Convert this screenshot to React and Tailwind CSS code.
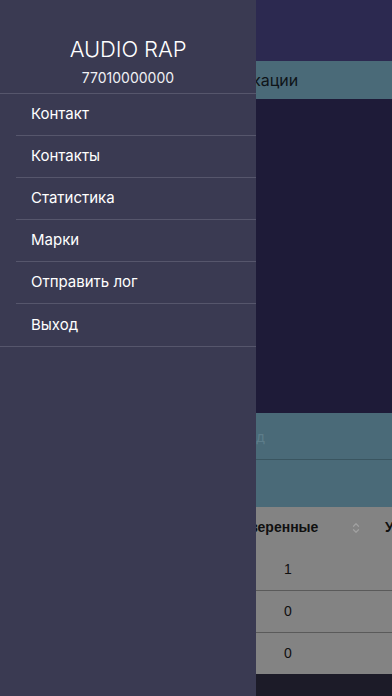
import { ChevronUp, ChevronDown } from "lucide-react";

const menu = ["Контакт", "Контакты", "Статистика", "Марки", "Отправить лог", "Выход"];
const rows = ["1", "0", "0"];

function MainScreen() {
  return (
    <div className="flex flex-col h-[696px] w-[392px] bg-[#1e1b38]">
      <div className="h-[61px] bg-[#2c2950]" />
      <div className="h-[38px] bg-[#4a6a78] flex items-center pl-[203px] text-[16px] text-[#0f1418] font-['Inter',sans-serif]">
        Публикации
      </div>
      <div className="flex-1" />
      <div className="h-[47px] bg-[#4a6a78] border-b border-[#3a5560] flex items-center pl-[239px] text-[14px] text-[#5d7d8a] font-['Inter',sans-serif]">
        Код
      </div>
      <div className="h-[47px] bg-[#4a6a78]" />
      <div className="bg-[#838383] font-['Liberation_Sans',sans-serif] text-[13px] text-[#101010]">
        <div className="h-[41px] flex items-center whitespace-nowrap">
          <span className="pl-[222px] w-[351px] shrink-0 font-bold text-[14px]">Проверенные</span>
          <span className="flex flex-col items-center -space-y-[4px] text-[#a0a0a0] shrink-0">
            <ChevronUp className="w-[10px] h-[10px]" strokeWidth={3} />
            <ChevronDown className="w-[10px] h-[10px]" strokeWidth={3} />
          </span>
          <span className="pl-[24px] font-bold text-[14px] shrink-0">Удаленные</span>
        </div>
        {rows.map((r, i) => (
          <div key={i} className={`h-[42px] flex items-center pl-[284px] text-[14px] ${i > 0 ? "border-t border-[#5a5a5a]" : ""}`}>
            {r}
          </div>
        ))}
      </div>
      <div className="h-[22px] bg-[#1c1b28]" />
    </div>
  );
}

function Drawer() {
  return (
    <div className="absolute left-0 top-0 h-[696px] w-[256px] bg-[#3a3a52] font-['Inter',sans-serif] text-white">
      <div className="h-[94px] flex flex-col items-center pt-[36px] border-b border-[#56566c]">
        <div className="text-[22px] font-light leading-[26px] tracking-[-0.1px]">AUDIO RAP</div>
        <div className="text-[14px] leading-[18px] mt-[7px] text-[#f0f0f4]">77010000000</div>
      </div>
      <div className="border-b border-[#56566c]">
        {menu.map((m, i) => (
          <div key={m} className="pl-[16px]">
            <div className={`h-[42px] flex items-center pl-[15px] text-[15px] ${i < menu.length - 1 ? "border-b border-[#56566c]" : ""}`}>
              {m}
            </div>
          </div>
        ))}
      </div>
    </div>
  );
}

export default function App() {
  return (
    <div className="relative w-[392px] h-[696px] overflow-hidden">
      <MainScreen />
      <Drawer />
    </div>
  );
}
